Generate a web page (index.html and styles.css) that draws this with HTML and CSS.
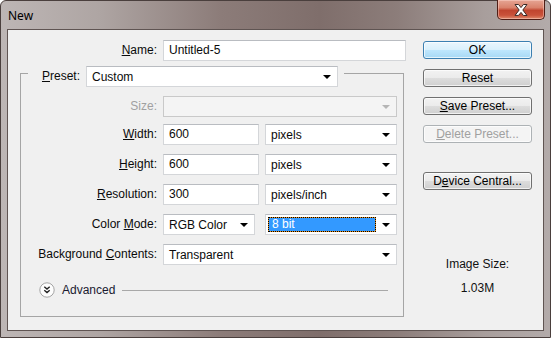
FILE: index.html
```html
<!DOCTYPE html>
<html lang="en">
<head>
    <meta charset="UTF-8">
    <title>New</title>
    <link rel="stylesheet" href="styles.css">
</head>
<body>
    <div class="window">
        <div class="titlebar">
            <span class="title">New</span>
            <button class="close" aria-label="Close">
                <svg width="20" height="14" viewBox="0 0 20 14">
                    <path d="M4 1.5h3.6L10 4.6l2.4-3.1H16l-4.2 5.5 4.2 5.5h-3.6L10 9.4l-2.4 3H4l4.2-5.4z" fill="#fff" stroke="#3a2a26" stroke-width="1"/>
                </svg>
            </button>
        </div>

        <div class="client">
            <div class="main">
                <div class="name-row">
                    <label class="lbl"><u>N</u>ame:</label>
                    <div class="field name-field">Untitled-5</div>
                </div>

                <div class="group">
                    <div class="group-head">
                        <label class="lbl"><u>P</u>reset:</label>
                        <div class="select preset">Custom<i class="arrow"></i></div>
                    </div>

                    <div class="grid">
                        <label class="lbl disabled first">Size:</label>
                        <div class="select disabled-select first"><i class="arrow"></i></div>

                        <label class="lbl"><u>W</u>idth:</label>
                        <div class="pair">
                            <div class="field num">600</div>
                            <div class="select">pixels<i class="arrow"></i></div>
                        </div>

                        <label class="lbl"><u>H</u>eight:</label>
                        <div class="pair">
                            <div class="field num">600</div>
                            <div class="select">pixels<i class="arrow"></i></div>
                        </div>

                        <label class="lbl"><u>R</u>esolution:</label>
                        <div class="pair">
                            <div class="field num">300</div>
                            <div class="select">pixels/inch<i class="arrow"></i></div>
                        </div>

                        <label class="lbl">Color <u>M</u>ode:</label>
                        <div class="pair mode">
                            <div class="select">RGB Color<i class="arrow"></i></div>
                            <div class="select focused"><span class="hilite">8 bit</span><i class="arrow"></i></div>
                        </div>

                        <label class="lbl">Background <u>C</u>ontents:</label>
                        <div class="select">Transparent<i class="arrow"></i></div>
                    </div>

                    <div class="advanced">
                        <span class="adv-icon">
                            <svg width="16" height="16" viewBox="0 0 16 16">
                                <circle cx="8" cy="8" r="7.2" fill="#fdfdfd" stroke="#a4a4a4"/>
                                <path d="M5.3 4.8l2.7 2.3 2.7-2.3M5.3 8.3l2.7 2.3 2.7-2.3" fill="none" stroke="#222" stroke-width="1.4"/>
                            </svg>
                        </span>
                        <span class="adv-text">Advanced</span>
                        <span class="adv-line"></span>
                    </div>
                </div>
            </div>

            <div class="side">
                <button class="btn default">OK</button>
                <button class="btn">Reset</button>
                <button class="btn"><u>S</u>ave Preset...</button>
                <button class="btn" disabled><u>D</u>elete Preset...</button>
                <button class="btn device">D<u>e</u>vice Central...</button>
                <div class="info">
                    <div>Image Size:</div>
                    <div class="info-value">1.03M</div>
                </div>
            </div>
        </div>
    </div>
</body>
</html>
```

FILE: styles.css
```css
body {
    margin: 0;
    background: #fff;
}

.window {
    width: 551px;
    height: 338px;
    box-sizing: border-box;
    display: flex;
    flex-direction: column;
    border: 1px solid #4a3f3d;
    border-radius: 6px 6px 0 0;
    background: linear-gradient(90deg, #bdb6b5 0%, #aea5a3 18%, #8c7c79 40%, #7f6e6b 58%, #8c7d7a 72%, #a89e9c 88%, #b3abaa 100%);
}

.titlebar {
    height: 28px;
    display: flex;
    justify-content: space-between;
    align-items: flex-start;
}

.title {
    font-family: "Noto Sans", "Open Sans", sans-serif;
    font-size: 12px;
    color: #000;
    margin: 6px 0 0 7px;
}

.close {
    width: 48px;
    height: 20px;
    margin: -1px 5px 0 0;
    padding: 0;
    border: 1px solid #4f1e16;
    border-top: none;
    border-radius: 0 0 5px 5px;
    background: linear-gradient(#e6a594 0%, #d9826c 40%, #c0452f 55%, #c9523a 80%, #de8a6c 100%);
    box-shadow: inset 0 0 0 1px rgba(255, 220, 210, 0.45);
    display: flex;
    align-items: center;
    justify-content: center;
}

.client {
    flex: 1;
    margin: 0 6px 6px 6px;
    border: 1px solid #5f5452;
    background: #f0f0f0;
    display: flex;
    font-family: "Liberation Sans", Arial, sans-serif;
    font-size: 12px;
    color: #0a0a0a;
}

.main {
    width: 398px;
    padding-top: 10px;
}

.lbl {
    text-align: right;
    line-height: 21px;
    white-space: nowrap;
}

.lbl.disabled {
    color: #a0a0a0;
}

.name-row {
    display: grid;
    grid-template-columns: 149px 243px;
    column-gap: 6px;
}

.field,
.select {
    height: 21px;
    box-sizing: border-box;
    background: #fff;
    border: 1px solid #d4d6d9;
    border-top-color: #b9bcc1;
    padding: 0 5px;
    line-height: 19px;
    position: relative;
}

.select {
    padding-right: 22px;
    line-height: 20px;
}

.arrow {
    position: absolute;
    right: 6px;
    top: 8px;
    border-left: 4px solid transparent;
    border-right: 4px solid transparent;
    border-top: 4px solid #000;
}

.group {
    margin: 12px 0 0 12px;
    width: 384px;
    box-sizing: border-box;
    border: 1px solid #a5a5a5;
    padding-bottom: 18px;
}

.group-head {
    display: flex;
    width: fit-content;
    gap: 6px;
    margin: -8px 0 0 7px;
    padding-right: 6px;
    background: #f0f0f0;
}

.group-head .lbl {
    width: 52px;
}

.preset {
    width: 252px;
}

.grid {
    display: grid;
    grid-template-columns: 136px 234px;
    column-gap: 6px;
    row-gap: 9px;
    margin-top: 9px;
}

.grid .first {
    margin-bottom: -2px;
}

.disabled-select {
    background: #f4f4f4;
    border-color: #c9c9c9;
}

.disabled-select .arrow {
    border-top-color: #b5b5b5;
}

.pair {
    display: grid;
    grid-template-columns: 96px 132px;
    column-gap: 6px;
}

.pair.mode {
    grid-template-columns: 92px 132px;
    column-gap: 10px;
}

.focused {
    padding: 2px 20px 2px 2px;
}

.hilite {
    display: block;
    height: 15px;
    box-sizing: border-box;
    line-height: 13px;
    padding-left: 3px;
    color: #fff;
    border: 1px dotted #000;
    background: linear-gradient(#3399ff, #3399ff) padding-box, #e8901c border-box;
}

.advanced {
    display: flex;
    align-items: center;
    margin: 17px 15px 0 18px;
    height: 16px;
}

.adv-icon {
    display: flex;
    margin-right: 7px;
}

.adv-text {
    color: #1a1a30;
    margin-right: 7px;
}

.adv-line {
    flex: 1;
    border-top: 1px solid #a8a8a8;
}

.side {
    width: 109px;
    margin-left: 17px;
    padding-top: 11px;
    display: flex;
    flex-direction: column;
    gap: 10px;
}

.btn {
    height: 18px;
    padding: 0;
    font-family: "Liberation Sans", Arial, sans-serif;
    font-size: 12px;
    line-height: 16px;
    color: #000;
    border: 1px solid #707070;
    border-radius: 3px;
    background: linear-gradient(#f2f2f2 0%, #ebebeb 50%, #dddddd 51%, #cfcfcf 100%);
    box-shadow: inset 0 0 0 1px rgba(255, 255, 255, 0.7);
}

.btn.default {
    border-color: #3c7fb1;
    background: linear-gradient(#eaf6fd 0%, #d9f0fc 50%, #bee6fd 51%, #a7d9f5 100%);
}

.btn:disabled {
    color: #a0a0a0;
    border-color: #adb2b5;
    background: #f4f4f4;
}

.btn.device {
    margin-top: 19px;
}

.info {
    margin-top: 52px;
    text-align: center;
    color: #111;
    line-height: 24px;
}
```
